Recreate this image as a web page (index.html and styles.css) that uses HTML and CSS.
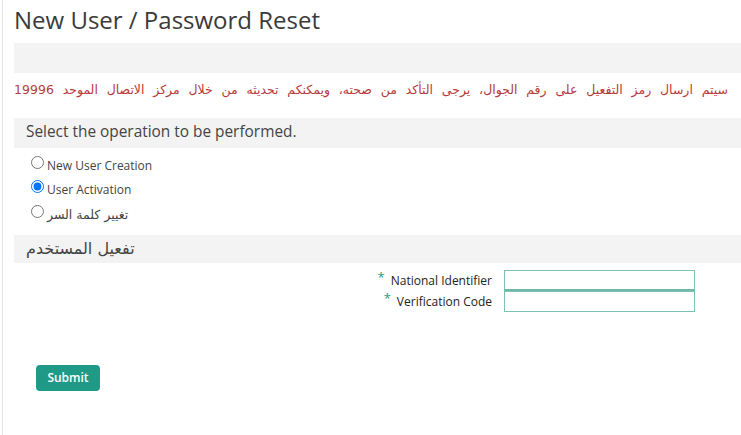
FILE: index.html
```html
<!DOCTYPE html>
<html lang="en">
<head>
<meta charset="utf-8">
<link rel="stylesheet" href="styles.css">
</head>
<body>
<div class="page">
  <h1 class="title">New User / Password Reset</h1>
  <div class="bar bar-empty"></div>
  <p class="notice" dir="rtl">سيتم ارسال رمز التفعيل على رقم الجوال، يرجى التأكد من صحته، ويمكنكم تحديثه من خلال مركز الاتصال الموحد 19996</p>

  <div class="bar section-head">Select the operation to be performed.</div>
  <div class="options">
    <label class="option"><input type="radio" name="op"><span>New User Creation</span></label>
    <label class="option"><input type="radio" name="op" checked><span>User Activation</span></label>
    <label class="option"><input type="radio" name="op"><span class="ar">تغيير كلمة السر</span></label>
  </div>

  <div class="bar section-head ar-head">تفعيل المستخدم</div>
  <div class="form">
    <label class="field-label"><span class="req">*</span>National Identifier</label>
    <input class="field first" type="text">
    <label class="field-label"><span class="req">*</span>Verification Code</label>
    <input class="field" type="text">
  </div>

  <div class="actions">
    <button class="submit" type="button">Submit</button>
  </div>
</div>
</body>
</html>
```
FILE: styles.css
```css
html, body {
  margin: 0;
  padding: 0;
  background: #ffffff;
  height: 100%;
}
body {
  font-family: "Open Sans", "DejaVu Sans", sans-serif;
  color: #333333;
}
.page {
  margin-left: 2px;
  border-left: 1px solid #e4e4e4;
  padding-left: 11px;
  min-height: 435px;
  box-sizing: border-box;
}
.title {
  margin: 0;
  padding-top: 5px;
  height: 37px;
  font-size: 24px;
  font-weight: 400;
  line-height: 30px;
  color: #3a3a3a;
}
.bar {
  background: #f3f3f3;
}
.bar-empty {
  height: 30px;
  margin-top: 1px;
}
.notice {
  margin: 0;
  height: 45px;
  padding-right: 13px;
  font-family: "DejaVu Sans", sans-serif;
  font-size: 12.5px;
  word-spacing: 4.8px;
  line-height: 34px;
  color: #b73a3a;
  white-space: nowrap;
}
.section-head {
  height: 30px;
  padding-left: 12px;
  font-size: 15.4px;
  line-height: 28px;
  color: #444444;
}
.options {
  display: flex;
  flex-direction: column;
  padding: 5px 0 8px 16px;
}
.option {
  display: flex;
  align-items: center;
  height: 24.5px;
  font-size: 12px;
  color: #444444;
}
.option input {
  margin: 0 3px 0 1px;
  width: 13px;
  height: 13px;
  position: relative;
  top: -3px;
}
.option .ar {
  font-family: "DejaVu Sans", sans-serif;
  font-size: 12.5px;
}
.ar-head {
  height: 28px;
  font-family: "DejaVu Sans", sans-serif;
  font-size: 16px;
  line-height: 28px;
}
.form {
  display: grid;
  grid-template-columns: 478px 191px;
  column-gap: 12px;
  margin-top: 7px;
}
.field-label {
  justify-self: end;
  align-self: center;
  font-size: 12px;
  color: #222222;
}
.req {
  color: #2a9a7e;
  font-size: 13px;
  margin-right: 6px;
  position: relative;
  top: -3px;
}
.field {
  box-sizing: border-box;
  width: 191px;
  height: 21px;
  border: 1px solid #7cc2b3;
  margin: 0;
  padding: 0 4px;
  background: #fff;
}
.field.first {
  height: 21px;
  border-bottom-width: 2px;
  border-bottom-color: #6db8a8;
}
.actions {
  padding: 53px 0 0 22px;
}
.submit {
  width: 64px;
  height: 26px;
  border: none;
  border-radius: 4px;
  background: #1f9a87;
  color: #ffffff;
  font-family: "Open Sans", sans-serif;
  font-size: 12px;
  font-weight: 600;
  padding: 0;
}
```
